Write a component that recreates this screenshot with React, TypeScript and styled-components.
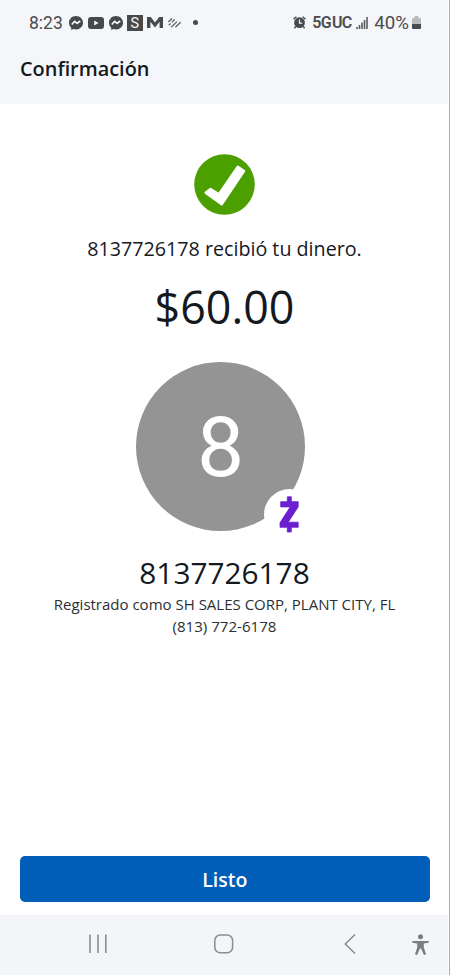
import React from 'react';
import styled, { createGlobalStyle } from 'styled-components';

const GlobalStyle = createGlobalStyle`
  * {
    box-sizing: border-box;
  }

  body {
    margin: 0;
    background: #fff;
  }
`;

const Screen = styled.div`
  display: flex;
  flex-direction: column;
  width: 450px;
  height: 975px;
  background: #fff;
  border-right: 1px solid #a9aaac;
  font-family: 'Open Sans', sans-serif;
  color: #14191f;
`;

const Header = styled.header`
  height: 104px;
  margin-right: 1px;
  background: #f4f6f9;
`;

const StatusBar = styled.div`
  display: flex;
  align-items: center;
  justify-content: space-between;
  height: 45px;
  padding: 0 27px 0 29px;
  font-family: Roboto, sans-serif;
  color: #4a4c4f;
`;

const StatusGroup = styled.div`
  display: flex;
  align-items: center;
`;

const StatusText = styled.span<{ $size: number; $gap?: number }>`
  margin-left: ${({ $gap }) => $gap ?? 0}px;
  font-size: ${({ $size }) => $size}px;
  line-height: 20px;
  white-space: nowrap;
`;

const NetworkText = styled(StatusText)`
  font-weight: 600;
  letter-spacing: -0.8px;
  word-spacing: -2px;
`;

const Glyph = styled.svg<{ $gap?: number }>`
  display: block;
  flex: none;
  margin-left: ${({ $gap }) => $gap ?? 0}px;
  overflow: visible;
`;

const SquareIcon = styled.span`
  width: 16px;
  height: 16px;
  margin-left: 4px;
  background: #48494b;
  color: #f4f6f9;
  font-size: 14.5px;
  line-height: 17px;
  text-align: center;
`;

const Title = styled.h1`
  margin: 10px 0 0 20px;
  font-size: 19.9px;
  font-weight: 600;
  line-height: 28px;
`;

const Content = styled.main`
  display: flex;
  flex: 1;
  flex-direction: column;
  align-items: center;
  padding-top: 50px;
`;

const Line = styled.p<{ $size: number; $height: number; $top?: number }>`
  margin: ${({ $top }) => $top ?? 0}px 0 0;
  font-size: ${({ $size }) => $size}px;
  line-height: ${({ $height }) => $height}px;
  white-space: nowrap;
`;

const Detail = styled(Line)`
  color: #2b2f34;
`;

const Avatar = styled.div`
  position: relative;
  width: 169px;
  height: 169px;
  margin: 25px 8px 0 0;
  border-radius: 50%;
  background: #949494;
  color: #fff;
  font-family: Roboto, sans-serif;
  font-size: 84px;
  line-height: 172px;
  text-align: center;
`;

const Badge = styled.div`
  position: absolute;
  left: 127.5px;
  top: 127px;
  width: 51px;
  height: 51px;
  border-radius: 50%;
  background: #fff;
`;

const Footer = styled.div`
  padding: 0 19.5px 13px 20px;
`;

const DoneButton = styled.button`
  display: block;
  width: 100%;
  height: 46px;
  padding: 1px 0 0;
  border: 0;
  border-radius: 5px;
  background: #005eb8;
  color: #fff;
  font-family: inherit;
  font-size: 19.5px;
  font-weight: 600;
  line-height: 46px;
`;

const NavBar = styled.nav`
  display: flex;
  align-items: flex-start;
  height: 60px;
  margin-right: 1px;
  padding: 19px 0 0 88px;
  background: #f4f5f8;
`;

const MessengerIcon = ({ gap }: { gap: number }) => (
  <Glyph $gap={gap} width="14" height="14" viewBox="0 0 14 14">
    <path
      d="M7 0C3 0 0 2.9 0 6.7c0 2 .8 3.7 2.2 4.9V14l2.3-1c.8.3 1.6.4 2.5.4 4 0 7-2.9 7-6.7S11 0 7 0z"
      fill="#48494b"
    />
    <path d="M2.8 8.5 5.6 5.3 8.1 7.4 11.2 5" fill="none" stroke="#f4f6f9" strokeWidth="1.7" strokeLinejoin="round" />
  </Glyph>
);

const YoutubeIcon = () => (
  <Glyph $gap={5} width="16" height="12" viewBox="0 0 16 12">
    <rect width="16" height="12" rx="3" fill="#48494b" />
    <path d="M6.2 3.5v5L10.6 6z" fill="#f4f6f9" />
  </Glyph>
);

const MailIcon = () => (
  <Glyph $gap={4} width="16" height="11" viewBox="0 0 16 11">
    <path d="M0 11V0h3.800L8 5.400 12.200 0H16v11h-3.400V4.800L8 10.400 3.400 4.800V11z" fill="#48494b" />
  </Glyph>
);

const StripesIcon = () => (
  <Glyph $gap={5} width="13" height="10" viewBox="0 0 13 10">
    <path
      d="M.4 4 4 .5M.8 7.2 2.6 5.5M3.8 4.4 6.6 1.5M3.2 9.2 9 3.6M7.4 9.2 12.6 4.2"
      fill="none"
      stroke="#5a5c5f"
      strokeWidth="1.2"
    />
  </Glyph>
);

const DotIcon = () => (
  <Glyph $gap={12} width="5" height="5" viewBox="0 0 5 5">
    <circle cx="2.5" cy="2.5" r="2.5" fill="#48494b" />
  </Glyph>
);

const AlarmIcon = () => (
  <Glyph width="13" height="13" viewBox="0 0 13 13">
    <circle cx="6.5" cy="6.7" r="5.4" fill="#48494b" />
    <path
      d="M.6 3.2 3.4.8M12.4 3.2 9.6.8M2.8 10.6 1.4 12.2M10.2 10.6l1.4 1.6"
      stroke="#48494b"
      strokeWidth="1.5"
    />
    <path d="M6.5 3.6v3.6h2.7" fill="none" stroke="#f4f6f9" strokeWidth="1.2" />
  </Glyph>
);

const SignalIcon = () => (
  <Glyph $gap={5} width="12" height="12" viewBox="0 0 12 12">
    <path d="M1 12v-2M3.5 12V8M6 12V5.5M8.5 12V3M11 12V0" stroke="#5a5c5f" strokeWidth="1.6" />
  </Glyph>
);

const BatteryIcon = () => (
  <Glyph $gap={3} width="9" height="13" viewBox="0 0 9 13">
    <path d="M0 8V3q0-1 1-1h1.5V1q0-1 1-1h2q1 0 1 1v1H8q1 0 1 1v5z" fill="#b9babc" />
    <path d="M0 8h9v4q0 1-1 1H1q-1 0-1-1z" fill="#48494b" />
  </Glyph>
);

const CheckIcon = () => (
  <Glyph width="61" height="61" viewBox="0 0 61 61">
    <circle cx="30.5" cy="30.5" r="30.3" fill="#4ba000" />
    <path
      d="M11.6 38.700 16.600 34.900 24.900 40.300 43.800 12.800 50 17 27.700 50.400z"
      fill="#fff"
      stroke="#fff"
      strokeWidth="2.4"
      strokeLinejoin="round"
    />
  </Glyph>
);

const ZelleIcon = () => (
  <Glyph $gap={15} width="21" height="51" viewBox="0 0 21 51">
    <path
      d="M8.3 7.8h4v4.900h6.900v5.200L9.200 33.200h10v5.100h-6.900V43h-4v-4.700H1v-4.600L11.200 17.900H1.700v-5.200h6.600z"
      fill="#6b1fce"
      stroke="#6b1fce"
      strokeWidth=".8"
      strokeLinejoin="round"
    />
  </Glyph>
);

const RecentsIcon = () => (
  <Glyph width="20" height="20" viewBox="0 0 20 20">
    <path d="M2 .5v18.5M10 .5v18.5M17.8.5v18.5" stroke="#8b8c8f" strokeWidth="1.6" />
  </Glyph>
);

const HomeIcon = () => (
  <Glyph $gap={106} width="20" height="20" viewBox="0 0 20 20">
    <rect x=".8" y="1" width="17.8" height="17.8" rx="5.5" fill="none" stroke="#8b8c8f" strokeWidth="1.5" />
  </Glyph>
);

const BackIcon = () => (
  <Glyph $gap={110} width="12" height="20" viewBox="0 0 12 20">
    <path d="M11 .5 1.3 10 11 19.5" fill="none" stroke="#8b8c8f" strokeWidth="1.5" />
  </Glyph>
);

const AccessibilityIcon = () => (
  <Glyph $gap={56} width="17" height="22" viewBox="0 0 17 22">
    <circle cx="8.5" cy="2.8" r="2.5" fill="#7c7d80" />
    <path
      d="M.3 6.9h16.4v1.9l-4.9.7v4l2.3 6.800-2.200.7-2.900-6.400h-1L5.100 21l-2.200-.7 2.300-6.800v-4L.3 8.8z"
      fill="#7c7d80"
    />
  </Glyph>
);

export default function App() {
  return (
    <>
      <GlobalStyle />
      <Screen>
        <Header>
          <StatusBar>
            <StatusGroup>
              <StatusText $size={17.5}>8:23</StatusText>
              <MessengerIcon gap={6} />
              <YoutubeIcon />
              <MessengerIcon gap={5} />
              <SquareIcon>S</SquareIcon>
              <MailIcon />
              <StripesIcon />
              <DotIcon />
            </StatusGroup>
            <StatusGroup>
              <AlarmIcon />
              <NetworkText $size={16} $gap={6}>5G UC</NetworkText>
              <SignalIcon />
              <StatusText $size={18.7} $gap={6}>40%</StatusText>
              <BatteryIcon />
            </StatusGroup>
          </StatusBar>
          <Title>Confirmación</Title>
        </Header>
        <Content>
          <CheckIcon />
          <Line $size={19.7} $height={28} $top={20}>8137726178 recibió tu dinero.</Line>
          <Line $size={44.8} $height={60} $top={14}>$60.00</Line>
          <Avatar>
            8
            <Badge>
              <ZelleIcon />
            </Badge>
          </Avatar>
          <Line $size={29.8} $height={40} $top={22}>8137726178</Line>
          <Detail $size={15} $height={22} $top={-0.5}>Registrado como SH SALES CORP, PLANT CITY, FL</Detail>
          <Detail $size={15.1} $height={22}>(813) 772-6178</Detail>
        </Content>
        <Footer>
          <DoneButton>Listo</DoneButton>
        </Footer>
        <NavBar>
          <RecentsIcon />
          <HomeIcon />
          <BackIcon />
          <AccessibilityIcon />
        </NavBar>
      </Screen>
    </>
  );
}
